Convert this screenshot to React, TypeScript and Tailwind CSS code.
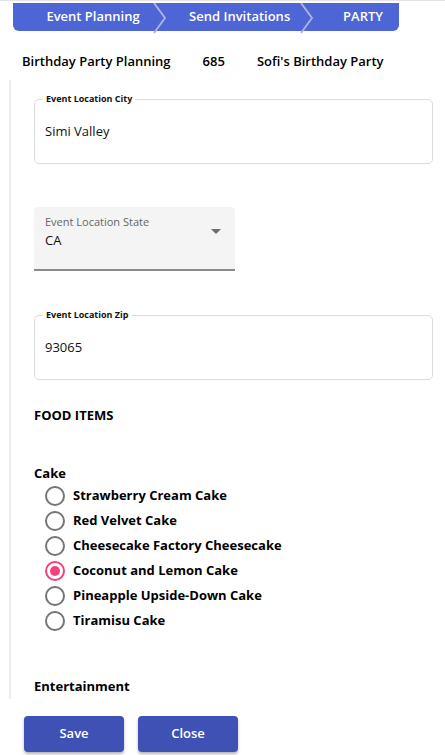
import React from 'react'

const font = { fontFamily: '"Open Sans", "Noto Sans", sans-serif' }

const steps = [
  { label: 'Event Planning', w: 'w-[140px]', pr: 'pr-[13px]' },
  { label: 'Send Invitations', w: 'w-[135px]', pr: 'pr-[10px]' },
  { label: 'PARTY', w: 'w-[86px]', pr: 'pr-[16px]' },
]

const cakes = [
  'Strawberry Cream Cake',
  'Red Velvet Cake',
  'Cheesecake Factory Cheesecake',
  'Coconut and Lemon Cake',
  'Pineapple Upside-Down Cake',
  'Tiramisu Cake',
]

function Chevron() {
  return (
    <svg width="13" height="31" viewBox="0 0 13 31" className="shrink-0 -mb-[2px] self-start">
      <polyline points="1,0 12,15 1,30" fill="none" stroke="#aab2e4" strokeWidth="2" />
    </svg>
  )
}

function OutlinedField({ label, value }: { label: string; value: string }) {
  return (
    <div className="relative h-[65px] rounded-[5px] border border-[#dcdcdc] px-[10px] flex items-center">
      <span className="absolute -top-[7px] left-[8px] bg-white px-[3px] text-[9px] font-bold leading-[12px] text-[#111]">
        {label}
      </span>
      <span className="text-[13px] text-[#111]">{value}</span>
    </div>
  )
}

export default function App() {
  const selected = 'Coconut and Lemon Cake'
  return (
    <div className="w-[445px] h-[755px] bg-white relative overflow-hidden border-t border-[#e4e4e4]" style={font}>
      <div className="ml-[13px] mt-[2px] w-[386px] h-[28px] bg-[#4d65d5] rounded-b-[6px] flex items-stretch">
        {steps.map((s, i) => (
          <React.Fragment key={s.label}>
            <div className={`${s.w} ${s.pr} flex items-center justify-end text-white text-[13px] font-semibold`}>
              {s.label}
            </div>
            {i < steps.length - 1 && <Chevron />}
          </React.Fragment>
        ))}
      </div>

      <div className="flex gap-[32px] pl-[22px] mt-[21px] h-[20px] items-center text-[13px] font-semibold text-black">
        <span>Birthday Party Planning</span>
        <span>685</span>
        <span>Sofi's Birthday Party</span>
      </div>

      <div className="ml-[9px] mt-[8px] h-[619px] border-l-2 border-[#ececec] pl-[23px] pr-[12px] pt-[19px]">
        <OutlinedField label="Event Location City" value="Simi Valley" />

        <div className="mt-[43px] w-[201px] h-[64px] bg-[#f4f4f4] rounded-t-[4px] border-b-2 border-[#8a8a8a] relative pl-[11px] pt-[8px]">
          <div className="text-[11px] text-[#666] leading-[14px]">Event Location State</div>
          <div className="text-[13px] text-[#111] leading-[20px] mt-[1px]">CA</div>
          <svg width="10" height="5" viewBox="0 0 10 5" className="absolute right-[14px] top-[22px]">
            <polygon points="0,0 10,0 5,5" fill="#6b6b6b" />
          </svg>
        </div>

        <div className="mt-[44px]">
          <OutlinedField label="Event Location Zip" value="93065" />
        </div>

        <div className="mt-[25px] text-[13px] font-bold text-black leading-[20px]">FOOD ITEMS</div>

        <div className="mt-[38px] text-[13px] font-bold text-black leading-[20px]">Cake</div>
        <div className="flex flex-col">
          {cakes.map((c) => {
            const on = c === selected
            return (
              <div key={c} className="h-[25px] flex items-center pl-[11px] gap-[8px]">
                <span
                  className={`w-[20px] h-[20px] rounded-full border-2 flex items-center justify-center ${
                    on ? 'border-[#f2417c]' : 'border-[#757575]'
                  }`}
                >
                  {on && <span className="w-[10px] h-[10px] rounded-full bg-[#f2417c]" />}
                </span>
                <span className="text-[13px] font-bold text-black">{c}</span>
              </div>
            )
          })}
        </div>

        <div className="mt-[43px] text-[13px] font-bold text-black leading-[20px]">Entertainment</div>
      </div>

      <div className="flex gap-[14px] pl-[24px] mt-[17px]">
        <button className="w-[100px] h-[36px] rounded-[4px] bg-[#3f51b5] text-white text-[13px] font-semibold shadow-[0_2px_3px_rgba(0,0,0,0.3)]">
          Save
        </button>
        <button className="w-[100px] h-[36px] rounded-[4px] bg-[#3f51b5] text-white text-[13px] font-semibold shadow-[0_2px_3px_rgba(0,0,0,0.3)]">
          Close
        </button>
      </div>
    </div>
  )
}
